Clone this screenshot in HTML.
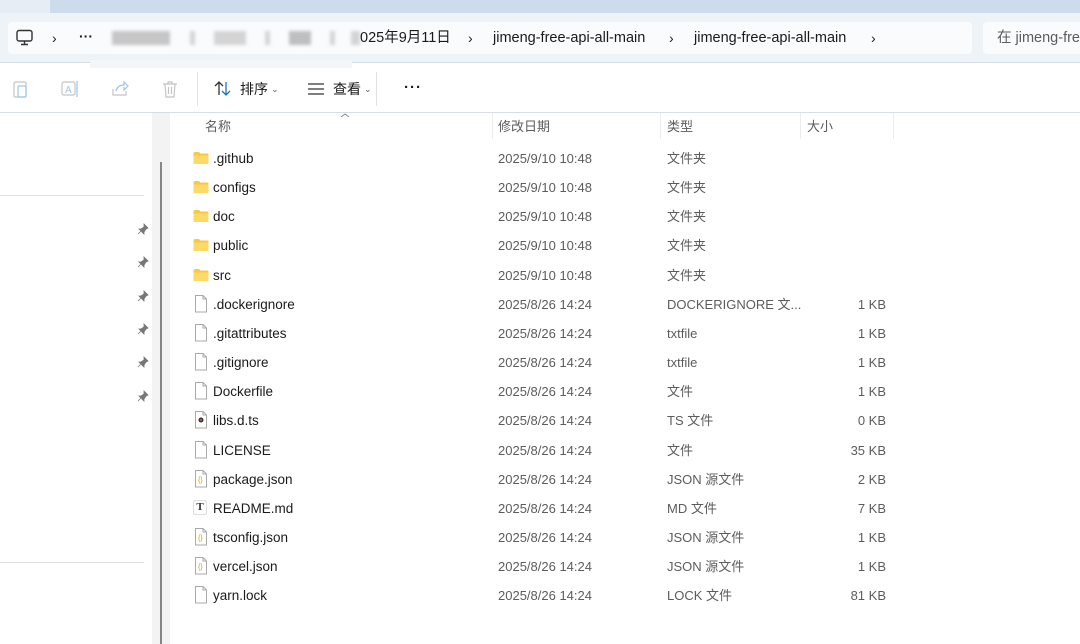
<!DOCTYPE html>
<html><head><meta charset="utf-8"><style>
*{margin:0;padding:0;box-sizing:border-box}
body{width:1080px;height:644px;overflow:hidden;background:#fff;font-family:"Liberation Sans","Noto Sans CJK SC",sans-serif;font-size:13px;color:#1a1a1a;position:relative}
.a{position:absolute;line-height:18px;white-space:nowrap}
.g{color:#5c5c5c}
.blk{position:absolute;background:#d4d4d4;height:14px;top:31px;filter:blur(1.5px)}
</style></head><body>
<div class="a" style="left:0;top:0;width:1080px;height:13px;background:#cddcea"></div>
<div class="a" style="left:0;top:0;width:50px;height:13px;background:#e6edf4"></div>
<div class="a" style="left:0;top:13px;width:1080px;height:50px;background:#eef3f8;border-bottom:1px solid #d5dde6"></div>
<div class="a" style="left:8px;top:22px;width:964px;height:32px;background:#f9fbfd;border-radius:4px"></div>
<div class="a" style="left:983px;top:22px;width:110px;height:32px;background:#f9fbfd;border-radius:4px"></div>
<svg class="a" style="left:15px;top:29px" width="20" height="18" viewBox="0 0 20 18"><rect x="2" y="1.5" width="15" height="10.5" rx="2" fill="none" stroke="#333" stroke-width="1.4"/><path d="M6 15.5h7M9.5 12v3.5" stroke="#333" stroke-width="1.4"/></svg>
<div class="a" style="left:52px;top:29px;font-size:14px">›</div>
<div class="a" style="left:79px;top:27px;font-size:14px;font-weight:bold">···</div>
<div class="blk" style="left:112px;width:58px;background:#c6c6c6"></div>
<div class="blk" style="left:190px;width:5px"></div>
<div class="blk" style="left:214px;width:32px"></div>
<div class="blk" style="left:265px;width:5px"></div>
<div class="blk" style="left:289px;width:22px;background:#bfbfbf"></div>
<div class="blk" style="left:330px;width:5px"></div>
<div class="blk" style="left:351px;width:9px"></div>
<div class="a" style="left:360px;top:29px;font-size:14.5px">025年9月11日</div>
<div class="a" style="left:468px;top:29px;font-size:14px">›</div>
<div class="a" style="left:493px;top:29px;font-size:14.5px">jimeng-free-api-all-main</div>
<div class="a" style="left:669px;top:29px;font-size:14px">›</div>
<div class="a" style="left:694px;top:29px;font-size:14.5px">jimeng-free-api-all-main</div>
<div class="a" style="left:871px;top:29px;font-size:14px">›</div>
<div class="a g" style="left:997px;top:29px;font-size:14.5px">在 jimeng-fre</div>
<div class="a" style="left:90px;top:60px;width:262px;height:8px;background:#f3f6f9"></div>
<svg class="a" style="left:11px;top:79px" width="20" height="20"><rect x="3" y="3" width="12" height="15" rx="1.5" fill="none" stroke="#c4c4c4" stroke-width="1.2"/><rect x="7" y="7" width="8" height="11" rx="1" fill="none" stroke="#9cc6ea" stroke-width="1.2"/></svg>
<svg class="a" style="left:60px;top:79px" width="22" height="20"><rect x="2" y="3" width="13" height="13" rx="2" fill="none" stroke="#c4c4c4" stroke-width="1.2"/><text x="5" y="14" font-size="10" fill="#9cc6ea" font-family="Liberation Sans">A</text><path d="M17 2v16" stroke="#9cc6ea" stroke-width="1.2"/></svg>
<svg class="a" style="left:110px;top:79px" width="20" height="20"><path d="M3 10v6h13v-4" fill="none" stroke="#c4c4c4" stroke-width="1.2"/><path d="M6 12c1-4 4-6 8-6V3l4 4-4 4V8" fill="none" stroke="#9cc6ea" stroke-width="1.2"/></svg>
<svg class="a" style="left:160px;top:79px" width="20" height="20"><path d="M3 5h14M8 5V3h4v2M5 5l1 13h8l1-13M8.5 8v7M11.5 8v7" fill="none" stroke="#c4c4c4" stroke-width="1.2"/></svg>
<div class="a" style="left:197px;top:72px;width:1px;height:34px;background:#e3e3e3"></div>
<svg class="a" style="left:213px;top:80px" width="20" height="18"><path d="M6 15V2M2 6l4-4 4 4" fill="none" stroke="#333" stroke-width="1.3"/><path d="M13 2v13M9 11l4 4 4-4" fill="none" stroke="#1a73c8" stroke-width="1.3"/></svg>
<div class="a" style="left:240px;top:80px;font-size:14px">排序</div>
<div class="a g" style="left:271px;top:80px;font-size:9px">⌄</div>
<svg class="a" style="left:307px;top:82px" width="18" height="14"><path d="M1 2h16M1 7h16M1 12h16" stroke="#333" stroke-width="1.2"/></svg>
<div class="a" style="left:333px;top:80px;font-size:14px">查看</div>
<div class="a g" style="left:364px;top:80px;font-size:9px">⌄</div>
<div class="a" style="left:376px;top:72px;width:1px;height:34px;background:#e3e3e3"></div>
<div class="a" style="left:404px;top:79px;font-size:15px;font-weight:bold;letter-spacing:1px">···</div>
<div class="a" style="left:0;top:112px;width:1080px;height:1px;background:#d5dde6"></div>
<div class="a" style="left:0;top:195px;width:144px;height:1px;background:#e0e0e0"></div>
<div class="a" style="left:0;top:562px;width:144px;height:1px;background:#e0e0e0"></div>
<div class="a" style="left:152px;top:113px;width:18px;height:531px;background:#f3f3f3"></div>
<div class="a" style="left:160px;top:162px;width:2px;height:482px;background:#868686"></div>
<div class="a" style="left:893px;top:113px;width:1px;height:26px;background:#ececec"></div>
<div class="a" style="left:492px;top:113px;width:1px;height:26px;background:#ececec"></div>
<div class="a" style="left:660px;top:113px;width:1px;height:26px;background:#ececec"></div>
<div class="a" style="left:800px;top:113px;width:1px;height:26px;background:#ececec"></div>
<svg class="a" style="left:340px;top:112px" width="10" height="6"><path d="M1 5l4-3 4 3" fill="none" stroke="#888"/></svg>
<div class="a g" style="left:205px;top:118px">名称</div>
<div class="a g" style="left:498px;top:118px">修改日期</div>
<div class="a g" style="left:667px;top:118px">类型</div>
<div class="a g" style="left:807px;top:118px">大小</div>
<div id="pins"></div>
<div id="rows"></div>
<script>
var pins=[229,262,296,329,362,396],h='';
pins.forEach(function(y){h+='<svg class="a" style="left:137px;top:'+(y-6)+'px" width="12" height="12"><path d="M7 1l4 4-2 1-2 3 0 2-5-5 2 0 3-2z M4 8l-3 3" fill="#777" stroke="#777" stroke-width="0.8"/></svg>';});
document.getElementById('pins').innerHTML=h;
var R=[['.github','2025/9/10 10:48','文件夹','','f'],['configs','2025/9/10 10:48','文件夹','','f'],['doc','2025/9/10 10:48','文件夹','','f'],['public','2025/9/10 10:48','文件夹','','f'],['src','2025/9/10 10:48','文件夹','','f'],
['.dockerignore','2025/8/26 14:24','DOCKERIGNORE 文...','1 KB','d'],['.gitattributes','2025/8/26 14:24','txtfile','1 KB','d'],['.gitignore','2025/8/26 14:24','txtfile','1 KB','d'],['Dockerfile','2025/8/26 14:24','文件','1 KB','d'],['libs.d.ts','2025/8/26 14:24','TS 文件','0 KB','t'],['LICENSE','2025/8/26 14:24','文件','35 KB','d'],['package.json','2025/8/26 14:24','JSON 源文件','2 KB','j'],['README.md','2025/8/26 14:24','MD 文件','7 KB','m'],['tsconfig.json','2025/8/26 14:24','JSON 源文件','1 KB','j'],['vercel.json','2025/8/26 14:24','JSON 源文件','1 KB','j'],['yarn.lock','2025/8/26 14:24','LOCK 文件','81 KB','d']];
h='';
R.forEach(function(r,i){var y=158+i*29.15,ic;
if(r[4]=='f')ic='<svg class="a" style="left:193px;top:'+(y-7)+'px" width="16" height="14"><path d="M0.5 2.5q0-1.5 1.5-1.5h4l1.5 1.5h7q1 0 1 1V12q0 1-1 1H1.5q-1 0-1-1z" fill="#f8c945"/><path d="M0.5 4.5h15V12q0 1-1 1H1.5q-1 0-1-1z" fill="#fdd968"/></svg>';
else if(r[4]=='m')ic='<div class="a" style="left:193px;top:'+(y-8)+'px;width:14px;height:15px;border:1px solid #ddd;border-radius:2px;font:bold 11px Liberation Serif;text-align:center;line-height:13px;color:#333">T</div>';
else{var inner=r[4]=='t'?'<circle cx="7" cy="9" r="2.5" fill="#333"/><circle cx="7" cy="9" r="1" fill="#e55"/>':r[4]=='j'?'<text x="4" y="12" font-size="7" fill="#c8a800" font-family="Liberation Sans">{}</text>':'';
ic='<svg class="a" style="left:194px;top:'+(y-9)+'px" width="14" height="18"><path d="M1.5 0.5h7.5l3.5 3.5v13h-11z" fill="#fff" stroke="#a9a9a9"/><path d="M9 0.5v3.5h3.5" fill="none" stroke="#a9a9a9"/>'+inner+'</svg>';}
var t=(y-8).toFixed(1);
h+=ic+'<div class="a" style="left:213px;top:'+t+'px;font-size:13.5px">'+r[0]+'</div><div class="a g" style="left:498px;top:'+t+'px">'+r[1]+'</div><div class="a g" style="left:667px;top:'+t+'px">'+r[2]+'</div><div class="a g" style="right:194px;top:'+t+'px">'+r[3]+'</div>';});
document.getElementById('rows').innerHTML=h;
</script>
</body></html>
